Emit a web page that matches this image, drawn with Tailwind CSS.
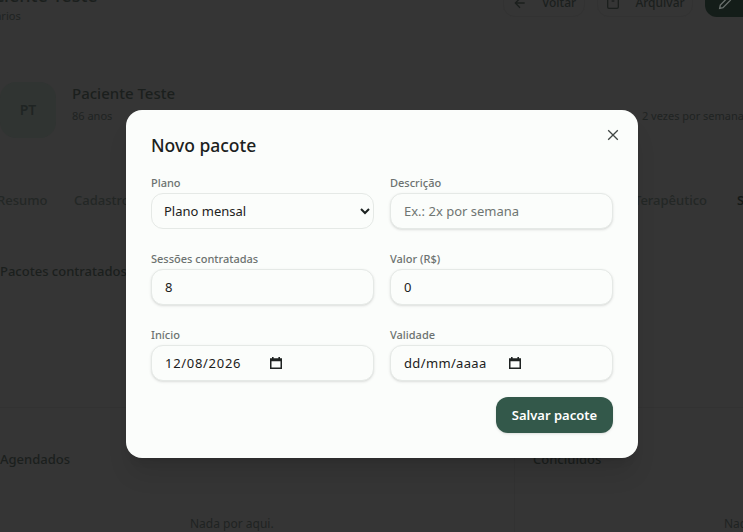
<!DOCTYPE html>
<html lang="pt-BR">
<head>
    <meta charset="UTF-8">
    <meta name="viewport" content="width=device-width, initial-scale=1.0">
    <title>Novo pacote</title>
    <script src="https://cdn.jsdelivr.net/npm/@tailwindcss/browser@4"></script>
</head>
<body class="bg-[#353535] font-['Noto_Sans',sans-serif] overflow-hidden">
    <div class="relative h-[532px] w-[743px] overflow-hidden text-[#1b1f1d]">
        <!-- Dimmed page behind the modal -->
        <div class="flex justify-between h-[94px] -mt-[12px] -ml-[26px]">
            <div class="-mt-[5px]">
                <h1 class="text-lg font-medium leading-[24px]">Paciente Teste</h1>
                <p class="text-[11px] leading-[16px] mt-[1px] -ml-[14px] text-[#1f2322]">Prontuários</p>
            </div>
            <div class="flex gap-[12px] -mr-[20px] h-[29px] text-xs font-medium">
                <div class="flex items-center gap-[14px] w-[82px] justify-center border border-[#323232] rounded-xl">
                    <svg class="w-4 h-4" viewBox="0 0 24 24" fill="none" stroke="currentColor" stroke-width="2"><path d="M19 12H5M12 5l-7 7 7 7"/></svg>
                    <span>Voltar</span>
                </div>
                <div class="flex items-center gap-[14px] w-[96px] justify-center border border-[#323232] rounded-xl">
                    <svg class="w-4 h-4" viewBox="0 0 24 24" fill="none" stroke="currentColor" stroke-width="2"><rect x="4" y="4" width="16" height="16" rx="2"/><path d="M10 9h4"/></svg>
                    <span>Arquivar</span>
                </div>
                <div class="flex items-center pl-[12px] w-[58px] bg-[#141d19] rounded-xl text-[#6a716e]">
                    <svg class="w-4 h-4" viewBox="0 0 24 24" fill="none" stroke="currentColor" stroke-width="2"><path d="M4 20l1-5L16 4l4 4L9 19z"/></svg>
                </div>
            </div>
        </div>

        <div class="flex h-[56px] items-start">
            <div class="w-[56px] h-[56px] shrink-0 bg-[#303432] rounded-2xl flex items-center justify-center text-sm font-semibold text-[#1f2423]">PT</div>
            <div class="ml-[16px] flex-1 pt-[1px]">
                <div class="text-[15px] font-medium leading-[20px]">Paciente Teste</div>
                <div class="flex justify-between mt-[5px] text-[11px] leading-[16px] text-[#1f2322]">
                    <span>86 anos</span>
                    <span class="-mr-[1px]">2 vezes por semana</span>
                </div>
            </div>
        </div>

        <div class="flex mt-[52px] -ml-[3px] h-[20px] text-[13px] font-medium leading-[20px] text-[#232725] whitespace-nowrap">
            <span class="w-[77px] shrink-0">Resumo</span>
            <span class="w-[560px] shrink-0">Cadastro</span>
            <span class="w-[103px] shrink-0">Terapêutico</span>
            <span class="font-semibold text-[#161a18]">Sessões</span>
        </div>

        <div class="mt-[51px] text-[13px] font-medium leading-[20px] whitespace-nowrap">Pacotes contratados</div>

        <div class="mt-[126px] border-t border-[#323232] flex pt-[41px] text-[13px] leading-[20px] font-medium">
            <div class="w-[515px] shrink-0 border-r border-[#323232] h-[90px]">
                <div>Agendados</div>
                <div class="mt-[47px] font-normal text-xs text-[#1f2322] pl-[190px]">Nada por aqui.</div>
            </div>
            <div class="pl-[18px] flex-1 whitespace-nowrap">
                <div>Concluídos</div>
                <div class="mt-[47px] font-normal text-xs text-[#1f2322] pl-[191px]">Nada por aqui.</div>
            </div>
        </div>

        <!-- Modal -->
        <div class="absolute left-[126px] top-[110px] w-[512px] h-[348px] bg-[#fbfdfb] rounded-2xl px-[25px] pt-[23px] shadow-xl">
            <button class="absolute right-[19px] top-[19px] text-[#3f4543]">
                <svg class="w-3 h-3 block" viewBox="0 0 12 12" fill="none" stroke="currentColor" stroke-width="1.3"><path d="M1.2 1.2l9.6 9.6M10.8 1.2l-9.6 9.6"/></svg>
            </button>
            <h2 class="text-[17.5px] font-medium leading-[24px] text-[#1b2120]">Novo pacote</h2>

            <div class="grid grid-cols-2 gap-x-4 gap-y-[22px] mt-[18px]">
                <label class="block">
                    <span class="block text-[11px] font-medium leading-[16px] mb-[2px] text-[#6c7270]">Plano</span>
                    <select class="w-full h-[36px] pl-[8px] pr-[7px] text-[13px] text-[#1b2120] bg-[#fbfdfb] border border-[#e5e9e6] rounded-xl">
                        <option>Plano mensal</option>
                    </select>
                </label>
                <label class="block">
                    <span class="block text-[11px] font-medium leading-[16px] mb-[2px] text-[#6c7270]">Descrição</span>
                    <input type="text" placeholder="Ex.: 2x por semana" class="w-full h-[36px] px-[13px] text-[13px] text-[#1b2120] placeholder:text-[#6f7572] bg-[#fbfdfb] border border-[#e5e9e6] rounded-xl shadow-sm">
                </label>
                <label class="block">
                    <span class="block text-[11px] font-medium leading-[16px] mb-[2px] text-[#6c7270]">Sessões contratadas</span>
                    <input type="text" value="8" class="w-full h-[36px] px-[13px] text-[13px] text-[#1b2120] bg-[#fbfdfb] border border-[#e5e9e6] rounded-xl shadow-sm">
                </label>
                <label class="block">
                    <span class="block text-[11px] font-medium leading-[16px] mb-[2px] text-[#6c7270]">Valor (R$)</span>
                    <input type="text" value="0" class="w-full h-[36px] px-[13px] text-[13px] text-[#1b2120] bg-[#fbfdfb] border border-[#e5e9e6] rounded-xl shadow-sm">
                </label>
                <label class="block">
                    <span class="block text-[11px] font-medium leading-[16px] mb-[2px] text-[#6c7270]">Início</span>
                    <div class="flex items-center h-[36px] pl-[13px] text-[13px] text-[#1b2120] bg-[#fbfdfb] border border-[#e5e9e6] rounded-xl shadow-sm">
                        <span class="w-[105px] tracking-[0.7px] pt-[1px]">12/08/2026</span>
                        <svg class="w-[14px] h-[14px] -ml-[1px]" viewBox="0 0 14 14" fill="#1f2322"><path d="M1 2.2h2V1h1.6v1.2h4.8V1H11v1.2h2V13H1zM2.5 5.3v6.2h9V5.3z"/></svg>
                    </div>
                </label>
                <label class="block">
                    <span class="block text-[11px] font-medium leading-[16px] mb-[2px] text-[#6c7270]">Validade</span>
                    <div class="flex items-center h-[36px] pl-[13px] text-[13px] text-[#1b2120] bg-[#fbfdfb] border border-[#e5e9e6] rounded-xl shadow-sm">
                        <span class="w-[105px] tracking-[0.35px] pt-[1px]">dd/mm/aaaa</span>
                        <svg class="w-[14px] h-[14px] -ml-[1px]" viewBox="0 0 14 14" fill="#1f2322"><path d="M1 2.2h2V1h1.6v1.2h4.8V1H11v1.2h2V13H1zM2.5 5.3v6.2h9V5.3z"/></svg>
                    </div>
                </label>
            </div>

            <div class="flex justify-end mt-[16px]">
                <button class="w-[117px] h-[36px] pt-[1px] bg-[#33584a] text-white text-[13px] font-semibold rounded-xl shadow-sm">Salvar pacote</button>
            </div>
        </div>
    </div>
</body>
</html>
